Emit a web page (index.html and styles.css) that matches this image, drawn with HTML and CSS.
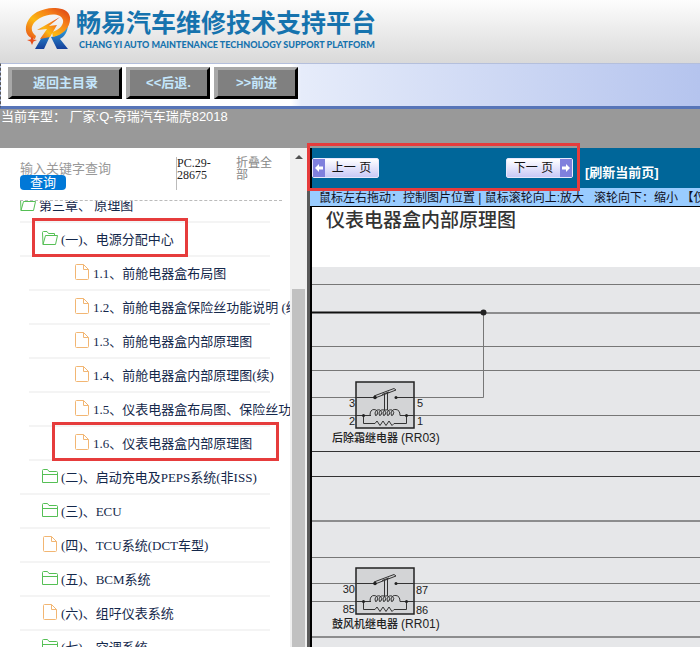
FILE: index.html
```html
<!DOCTYPE html>
<html lang="zh-CN">
<head>
  <meta charset="UTF-8">
  <meta name="viewport" content="width=device-width, initial-scale=1">
  <title>畅易汽车维修技术支持平台</title>
  <link rel="stylesheet" href="styles.css">
</head>
<body>

<!-- 图标 -->
<svg class="defs" aria-hidden="true">
  <symbol id="folder" viewBox="0 0 16 14">
    <path d="M.5 13.500V1.500Q.5.500 1.500.500H5.500L7 2.500H14.500Q15.500 2.500 15.500 3.500V13.500ZM.5 5.500H15.500"/>
  </symbol>
  <symbol id="folder-open" viewBox="0 0 16 14">
    <path d="M1 13.500L.5 1.500Q.5.500 1.500.500H5L6.500 2.500H12.500V4.500M1 13.500L3.500 4.500H15.500L13.500 13.500Z"/>
  </symbol>
  <symbol id="file" viewBox="0 0 14 16">
    <path d="M1.500.500H8.500L13.500 5.500V14.500Q13.500 15.500 12.500 15.500H1.500Q.5 15.500.5 14.500V1.500Q.5.500 1.500.500ZM8.500.500V5.500H13.500"/>
  </symbol>
  <symbol id="relay" viewBox="0 0 60 48">
    <rect x="1" y="1" width="58" height="46" fill="#d3d4d6" stroke="#222" stroke-width="1.500"/>
    <g fill="none" stroke="#333">
      <path d="M0 16.500H20M41 16.500H60M0 34.500H16M50 34.500H60"/>
      <path d="M19 15L39 7.500L41 9L20 17Z"/>
      <path d="M29.500 13V29M32.500 12V29M27 13.500L34 11"/>
      <path d="M15 34.500Q15 28.500 19 28.500Q24 29 22 34Q20 36 20 32Q21 28 25 29Q28 31 26 34Q24 36 24 32Q25 28 29 29Q32 31 30 34Q28 36 28 32Q29 28 33 29Q36 31 34 34Q32 36 32 32Q33 28 37 29Q40 31 38 34Q36 36 36 32Q37 28 41 28.500Q45 29 45 34.500H51"/>
      <path d="M8.500 34V42.500H20L22 40L25 44.500L28 40L31 44.500L34 40L37 44.500L39 42.500H51.500V34"/>
    </g>
    <g fill="#222">
      <circle cx="20" cy="16.500" r="1.800"/>
      <circle cx="41" cy="16.500" r="1.500"/>
      <circle cx="8.500" cy="34.500" r="1.500"/>
      <circle cx="51.500" cy="34.500" r="1.500"/>
    </g>
  </symbol>
</svg>

<header class="header">
  <svg class="logo" viewBox="0 0 46 42" aria-hidden="true">
    <defs>
      <linearGradient id="orange" x1="0" y1="1" x2="1" y2="0">
        <stop offset="0" stop-color="#e8501c"/>
        <stop offset=".4" stop-color="#fbb812"/>
        <stop offset=".7" stop-color="#f57d18"/>
        <stop offset="1" stop-color="#d93a15"/>
      </linearGradient>
      <linearGradient id="blue" x1="0" y1="0" x2="0" y2="1">
        <stop offset="0" stop-color="#35b4ea"/>
        <stop offset="1" stop-color="#153f9a"/>
      </linearGradient>
    </defs>
    <path fill="url(#blue)" d="M17 29L26 26L19 41H10ZM26 29C33 28 39 24 43 16C43 24 39 29 35 31L43 41H32Z"/>
    <path fill="url(#orange)" d="M10 31C-3 29-2 12 12 4C24-2 43-2 45 9C46 19 38 27 28 29L27 24C34 22 39 17 38 12C36 5 24 5 15 10C6 15 4 23 11 28Z"/>
    <path fill="url(#orange)" d="M35 9L12 22L22 21L15 31L25 29L32 17L24 18Z"/>
    <path fill="#e8501c" d="M7 28L8.500 31.500L12 32L8.500 33.500L7 37L5.500 33.500L2 32L5.500 31.500Z"/>
  </svg>
  <div>
    <h1>畅易汽车维修技术支持平台</h1>
    <p class="slogan">CHANG YI AUTO MAINTENANCE TECHNOLOGY SUPPORT PLATFORM</p>
  </div>
</header>

<nav class="toolbar">
  <button class="btn btn-home" type="button">返回主目录</button>
  <button class="btn" type="button">&lt;&lt;后退.</button>
  <button class="btn" type="button">&gt;&gt;前进</button>
</nav>

<div class="car-info">当前车型： 厂家:Q-奇瑞汽车瑞虎82018</div>

<main class="main">
  <aside class="sidebar">
    <div class="side-content">
      <form class="search">
        <div class="search-box">
          <input type="text" placeholder="输入关键字查询" aria-label="输入关键字查询">
          <button type="button">查询</button>
        </div>
        <span class="code">PC.29-28675</span>
        <a class="collapse" href="#">折叠全部</a>
      </form>

      <div class="tree-wrap">
        <ul class="tree">
          <li class="chapter"><a href="#"><svg class="icon folder"><use href="#folder-open"/></svg>第三章、 原理图</a></li>
          <li class="section"><a class="marked" href="#"><svg class="icon folder"><use href="#folder-open"/></svg>(一)、电源分配中心</a></li>
          <li class="page"><a href="#"><svg class="icon file"><use href="#file"/></svg>1.1、前舱电器盒布局图</a></li>
          <li class="page"><a href="#"><svg class="icon file"><use href="#file"/></svg>1.2、前舱电器盒保险丝功能说明 (续)</a></li>
          <li class="page"><a href="#"><svg class="icon file"><use href="#file"/></svg>1.3、前舱电器盒内部原理图</a></li>
          <li class="page"><a href="#"><svg class="icon file"><use href="#file"/></svg>1.4、前舱电器盒内部原理图(续)</a></li>
          <li class="page"><a href="#"><svg class="icon file"><use href="#file"/></svg>1.5、仪表电器盒布局图、保险丝功能说明</a></li>
          <li class="page"><a class="marked" href="#"><svg class="icon file"><use href="#file"/></svg>1.6、仪表电器盒内部原理图</a></li>
          <li class="section"><a href="#"><svg class="icon folder"><use href="#folder"/></svg>(二)、启动充电及PEPS系统(非ISS)</a></li>
          <li class="section"><a href="#"><svg class="icon folder"><use href="#folder"/></svg>(三)、ECU</a></li>
          <li class="section"><a href="#"><svg class="icon file"><use href="#file"/></svg>(四)、TCU系统(DCT车型)</a></li>
          <li class="section"><a href="#"><svg class="icon folder"><use href="#folder"/></svg>(五)、BCM系统</a></li>
          <li class="section"><a href="#"><svg class="icon file"><use href="#file"/></svg>(六)、组吇仪表系统</a></li>
          <li class="section"><a href="#"><svg class="icon folder"><use href="#folder"/></svg>(七)、空调系统</a></li>
        </ul>
      </div>
    </div>
    <div class="scrollbar">
      <span class="arrow-up"></span>
      <span class="thumb"></span>
    </div>
  </aside>

  <section class="viewer">
    <div class="pager">
      <div class="pager-buttons">
        <button class="page-btn prev" type="button">
          <span class="cap"><svg viewBox="0 0 10 10"><path d="M1 5L5 1V3.500H9V6.500H5V9Z"/></svg></span>
          <span class="label">上一 页</span>
        </button>
        <button class="page-btn next" type="button">
          <span class="label">下一 页</span>
          <span class="cap"><svg viewBox="0 0 10 10"><path d="M9 5L5 1V3.500H1V6.500H5V9Z"/></svg></span>
        </button>
      </div>
      <a class="refresh" href="#">[刷新当前页]</a>
    </div>
    <div class="hint">鼠标左右拖动：控制图片位置 | 鼠标滚轮向上:放大 &nbsp; 滚轮向下：缩小 【仅支持IE浏览器】</div>
    <div class="stage">
      <h2>仪表电器盒内部原理图</h2>
      <svg class="diagram">
        <!-- 导线 -->
        <g class="wires">
          <line x1="0" y1="17.500" x2="100%" y2="17.500"/>
          <line x1="0" y1="79.500" x2="100%" y2="79.500"/>
          <line x1="0" y1="103.500" x2="100%" y2="103.500"/>
          <line x1="0" y1="130.500" x2="44" y2="130.500"/>
          <path d="M103 130.500H171.500V45"/>
          <line x1="0" y1="148.500" x2="44" y2="148.500"/>
          <line x1="103" y1="148.500" x2="100%" y2="148.500"/>
          <line x1="0" y1="290.500" x2="100%" y2="290.500"/>
          <line x1="0" y1="316.500" x2="44" y2="316.500"/>
          <line x1="103" y1="316.500" x2="100%" y2="316.500"/>
          <line x1="0" y1="334.500" x2="44" y2="334.500"/>
          <line x1="103" y1="334.500" x2="100%" y2="334.500"/>
        </g>
        <g class="wires dark">
          <line x1="171" y1="46" x2="100%" y2="46"/>
          <line x1="0" y1="184.500" x2="100%" y2="184.500"/>
          <line x1="0" y1="209.500" x2="100%" y2="209.500"/>
          <line x1="0" y1="254" x2="100%" y2="254"/>
          <line x1="0" y1="370" x2="100%" y2="370"/>
        </g>
        <line class="bus" x1="0" y1="45.500" x2="171" y2="45.500"/>
        <circle cx="171.500" cy="45.500" r="3"/>

        <!-- 后除霜继电器 -->
        <use href="#relay" x="43" y="114" width="60" height="48"/>
        <text x="43" y="140" class="end">3</text>
        <text x="43" y="158" class="end">2</text>
        <text x="105" y="140">5</text>
        <text x="105" y="158">1</text>
        <text x="20" y="175">后除霜继电器 <tspan class="model">(RR03)</tspan></text>

        <!-- 鼓风机继电器 -->
        <use href="#relay" x="43" y="300" width="60" height="48"/>
        <text x="43" y="326" class="end">30</text>
        <text x="43" y="346" class="end">85</text>
        <text x="104" y="327">87</text>
        <text x="104" y="347">86</text>
        <text x="20" y="361">鼓风机继电器 <tspan class="model">(RR01)</tspan></text>
      </svg>
    </div>
  </section>
</main>

</body>
</html>
```
FILE: styles.css
```css
* {
  box-sizing: border-box;
}
body {
  margin: 0;
  height: 100vh;
  display: flex;
  flex-direction: column;
  overflow: hidden;
  font-family: "Liberation Sans", "Noto Sans CJK SC", sans-serif;
  font-size: 13px;
}
a {
  color: inherit;
  text-decoration: none;
}
button {
  font-family: inherit;
  cursor: pointer;
}
.defs {
  position: absolute;
  width: 0;
  height: 0;
}

/* header */
.header {
  flex: none;
  display: flex;
  gap: 5px;
  height: 63px;
  padding: 8px 0 0 25px;
  background: linear-gradient(#fdfdfd, #d9d9d9);
  color: #1673ae;
}
.logo {
  width: 46px;
  height: 42px;
}
.header h1 {
  margin: 0;
  font-size: 25px;
  line-height: 30px;
  white-space: nowrap;
}
.slogan {
  margin: 0 0 0 3px;
  font-family: Lato, sans-serif;
  font-size: 9px;
  font-weight: 900;
  line-height: 14px;
  white-space: nowrap;
}

/* toolbar */
.toolbar {
  flex: none;
  display: flex;
  gap: 4px;
  height: 46px;
  padding: 3px 0 0 7px;
  border-top: 1px solid #b4bfdc;
  border-bottom: 3px solid #5775b8;
  border-left: 1px dashed #555;
  background: linear-gradient(90deg, #fff 290px, #e6ecfa 300px, #b5c4ee 100%);
}
.btn {
  width: 84px;
  height: 32px;
  padding: 0;
  border: 3px solid;
  border-color: #a8a8a8 #000 #000 #a8a8a8;
  border-left-width: 4px;
  background: #808080;
  color: #c4e6fb;
  font-size: 13px;
  font-weight: bold;
  line-height: 24px;
}
.btn-home {
  width: 114px;
}
.car-info {
  flex: none;
  height: 39px;
  padding-left: 1px;
  background: #999;
  color: #fff;
  line-height: 15px;
}

/* layout */
.main {
  flex: 1;
  min-height: 0;
  display: flex;
}
.sidebar {
  flex: none;
  width: 307px;
  display: flex;
}
.side-content {
  flex: 1;
  min-width: 0;
  display: flex;
  flex-direction: column;
}

/* search */
.search {
  flex: none;
  display: flex;
  height: 53px;
  margin: 0 8px 0 20px;
  padding-top: 9px;
  border-bottom: 1px dashed #bbb;
  font-size: 12px;
  line-height: 12px;
}
.search-box {
  width: 157px;
  height: 33px;
  border-right: 1px solid #bbb;
}
.search-box input {
  display: block;
  width: 150px;
  height: 18px;
  padding: 4px 0 0;
  border: 0;
  outline: 0;
  background: none;
  font-family: inherit;
  font-size: 13px;
}
.search-box input::placeholder {
  color: #999;
}
.search-box button {
  display: block;
  width: 46px;
  height: 15px;
  padding: 0;
  border: 0;
  border-radius: 4px;
  background: #0078d7;
  color: #fff;
  font-size: 13px;
  line-height: 15px;
}
.code {
  width: 36px;
  margin-right: 23px;
  font-family: "Liberation Serif", serif;
  color: #222;
}
.collapse {
  width: 36px;
  color: #888;
}

/* tree */
.tree-wrap {
  flex: 1;
  min-height: 0;
  overflow: hidden;
}
.tree {
  list-style: none;
  margin: -12px 0 0;
  padding: 0 0 0 20px;
  font-family: "Liberation Serif", "Noto Sans CJK SC", serif;
  color: #14284b;
  white-space: nowrap;
}
.tree li {
  width: 250px;
  height: 34px;
  border-bottom: 2px solid #f4f4f4;
}
.tree .section {
  padding-left: 22px;
}
.tree .page {
  width: 241px;
  margin-left: 9px;
  padding-left: 45px;
}
.tree a {
  display: flex;
  align-items: center;
  gap: 3px;
  height: 30px;
}
.icon {
  flex: none;
  width: 16px;
  height: 16px;
  fill: none;
}
.folder {
  height: 14px;
  stroke: #55bf55;
}
.file {
  stroke: #f2b673;
}
.marked {
  position: relative;
}
.marked::after {
  content: "";
  position: absolute;
  top: -5px;
  bottom: -4px;
  left: -10px;
  right: 82px;
  border: 3px solid #e63c3c;
}
.page .marked::after {
  left: -22px;
  right: -9px;
}

/* scrollbar */
.scrollbar {
  width: 17px;
  display: flex;
  flex-direction: column;
  align-items: center;
  padding-top: 7px;
  background: #f0f0f0;
}
.arrow-up {
  border: 4px solid transparent;
  border-top-width: 0;
  border-bottom: 4px solid #505050;
}
.thumb {
  flex: 1;
  width: 13px;
  margin-top: 130px;
  background: #c1c1c1;
}

/* viewer */
.viewer {
  flex: 1;
  min-width: 0;
  display: flex;
  flex-direction: column;
  border-left: 3px solid #5a5a5a;
}
.pager {
  flex: none;
  display: flex;
  height: 40px;
  border-left: 2px solid #000;
  background: #069;
}
.pager-buttons {
  position: relative;
  display: flex;
  justify-content: space-between;
  align-items: center;
  width: 261px;
}
.pager-buttons::after {
  content: "";
  position: absolute;
  top: -5px;
  right: -7px;
  bottom: -3px;
  left: -5px;
  border: 3px solid #e63c3c;
}
.page-btn {
  display: flex;
  width: 67px;
  height: 20px;
  padding: 0;
  border: 1px solid #e8e8fc;
  border-radius: 2px;
  background: linear-gradient(#fff, #c9c9f6);
  color: #111;
  font-size: 12px;
  line-height: 18px;
}
.page-btn .label {
  flex: 1;
}
.cap {
  display: flex;
  align-items: center;
  width: 12px;
  height: 18px;
  background: #7f80dd;
}
.cap svg {
  width: 10px;
  height: 10px;
  margin: auto;
  fill: #fff;
}
.refresh {
  margin-left: 12px;
  padding-top: 16px;
  color: #fff;
  font-weight: bold;
  line-height: 18px;
  white-space: nowrap;
}
.hint {
  flex: none;
  height: 18px;
  padding-left: 9px;
  overflow: hidden;
  background: #9cf;
  color: #112;
  font-size: 12px;
  line-height: 20px;
  white-space: nowrap;
}
.stage {
  flex: 1;
  min-height: 0;
  display: flex;
  flex-direction: column;
  overflow: hidden;
  border-top: 1px solid #000;
  border-left: 2px solid #000;
}
.stage h2 {
  flex: none;
  height: 60px;
  margin: 0;
  padding-left: 14px;
  color: #333;
  font-size: 19px;
  font-weight: 500;
  line-height: 28px;
}
.diagram {
  flex: 1;
  width: 100%;
  background: #e6e7e9;
  font-size: 11px;
  font-weight: 500;
  fill: #222;
}
.model {
  font-size: 12px;
}
.wires {
  fill: none;
  stroke: #777;
}
.dark {
  stroke: #333;
}
.bus {
  stroke: #111;
  stroke-width: 2px;
}
.end {
  text-anchor: end;
}
```
